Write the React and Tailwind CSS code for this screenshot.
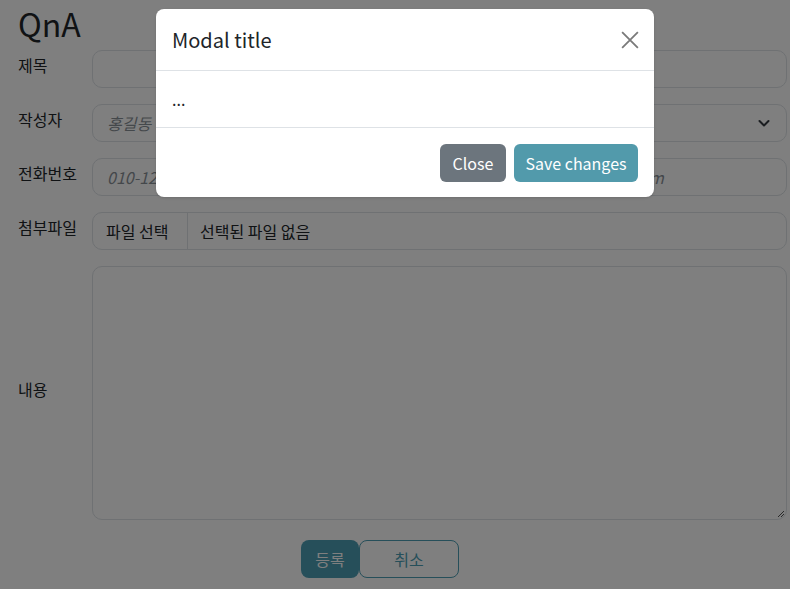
import React from "react";

const font = { fontFamily: '"Noto Sans CJK KR", "Noto Sans", sans-serif' };

function Row({ label, children, className = "" }) {
  return (
    <div className={`flex items-center ${className}`}>
      <label className="w-[74px] shrink-0 pb-[8px] text-[16px] text-[#212529]">{label}</label>
      <div className="flex-1">{children}</div>
    </div>
  );
}

export default function App() {
  return (
    <div className="relative min-h-screen w-[790px] h-[589px] overflow-hidden bg-white" style={font}>
      <div className="pl-[18px] pr-[3px]">
        <h2 className="pt-[4px] h-[50px] text-[32px] leading-[38px] text-[#212529] font-normal">QnA</h2>
        <div className="flex flex-col gap-[16px]">
          <Row label="제목">
            <div className="h-[38px] rounded-[10px] border border-[#dee2e6] bg-white" />
          </Row>
          <Row label="작성자">
            <div className="h-[38px] rounded-[10px] border border-[#dee2e6] bg-white flex items-center justify-between pl-[14px] pr-[14px]">
              <span className="italic text-[16px] text-[#6c757d] opacity-80">홍길동</span>
              <svg width="16" height="16" viewBox="0 0 16 16" fill="none" stroke="#343a40" strokeWidth="2" strokeLinecap="round" strokeLinejoin="round">
                <path d="M3.5 6l4.5 4.5L12.5 6" />
              </svg>
            </div>
          </Row>
          <Row label="전화번호">
            <div className="h-[38px] rounded-[10px] border border-[#dee2e6] bg-white flex items-center pl-[14px] overflow-hidden whitespace-nowrap">
              <span className="italic text-[16px] text-[#6c757d] opacity-80">010-1234-5678 또는 연락 가능한 이메일 주소를 입력하세요. hong@example.com</span>
            </div>
          </Row>
          <Row label="첨부파일">
            <div className="h-[38px] rounded-[10px] border border-[#dee2e6] bg-white flex items-center overflow-hidden text-[16px] text-[#212529]">
              <div className="h-full w-[95px] shrink-0 flex items-center pl-[13px] border-r border-[#dee2e6]">파일 선택</div>
              <div className="pl-[12px]">선택된 파일 없음</div>
            </div>
          </Row>
          <Row label="내용">
            <div className="relative h-[254px] rounded-[10px] border border-[#dee2e6] bg-white">
              <svg className="absolute right-[1px] bottom-[1px]" width="10" height="10" viewBox="0 0 10 10" stroke="#555" strokeWidth="1">
                <path d="M9 3L3 9M9 6L6 9" />
              </svg>
            </div>
          </Row>
        </div>
        <div className="flex mt-[20px] ml-[283px] text-[16px]">
          <button className="h-[38px] w-[58px] rounded-[8px] bg-[#4c9eb4] text-white">등록</button>
          <button className="h-[38px] w-[100px] rounded-[8px] border border-[#4c9eb4] text-[#4c9eb4]">취소</button>
        </div>
      </div>

      <div className="absolute inset-0 bg-black/50">
        <div className="ml-[156px] mt-[9px] w-[498px] rounded-[8px] bg-white shadow-sm">
          <div className="flex items-center justify-between h-[62px] pl-[16px] pr-[15px] border-b border-[#dee2e6]">
            <h5 className="text-[20px] leading-[30px] text-[#212529] font-normal">Modal title</h5>
            <svg width="18" height="18" viewBox="0 0 16 16" stroke="#7a7a7a" strokeWidth="1.6">
              <path d="M1 1L15 15M15 1L1 15" />
            </svg>
          </div>
          <div className="h-[57px] px-[16px] flex items-center text-[16px] text-[#212529] border-b border-[#dee2e6]">...</div>
          <div className="h-[69px] flex items-center justify-end gap-[8px] px-[16px] text-[16px]">
            <button className="h-[38px] w-[66px] rounded-[6px] bg-[#6c757d] text-white">Close</button>
            <button className="h-[38px] w-[124px] rounded-[6px] bg-[#529aab] text-white">Save changes</button>
          </div>
        </div>
      </div>
    </div>
  );
}
